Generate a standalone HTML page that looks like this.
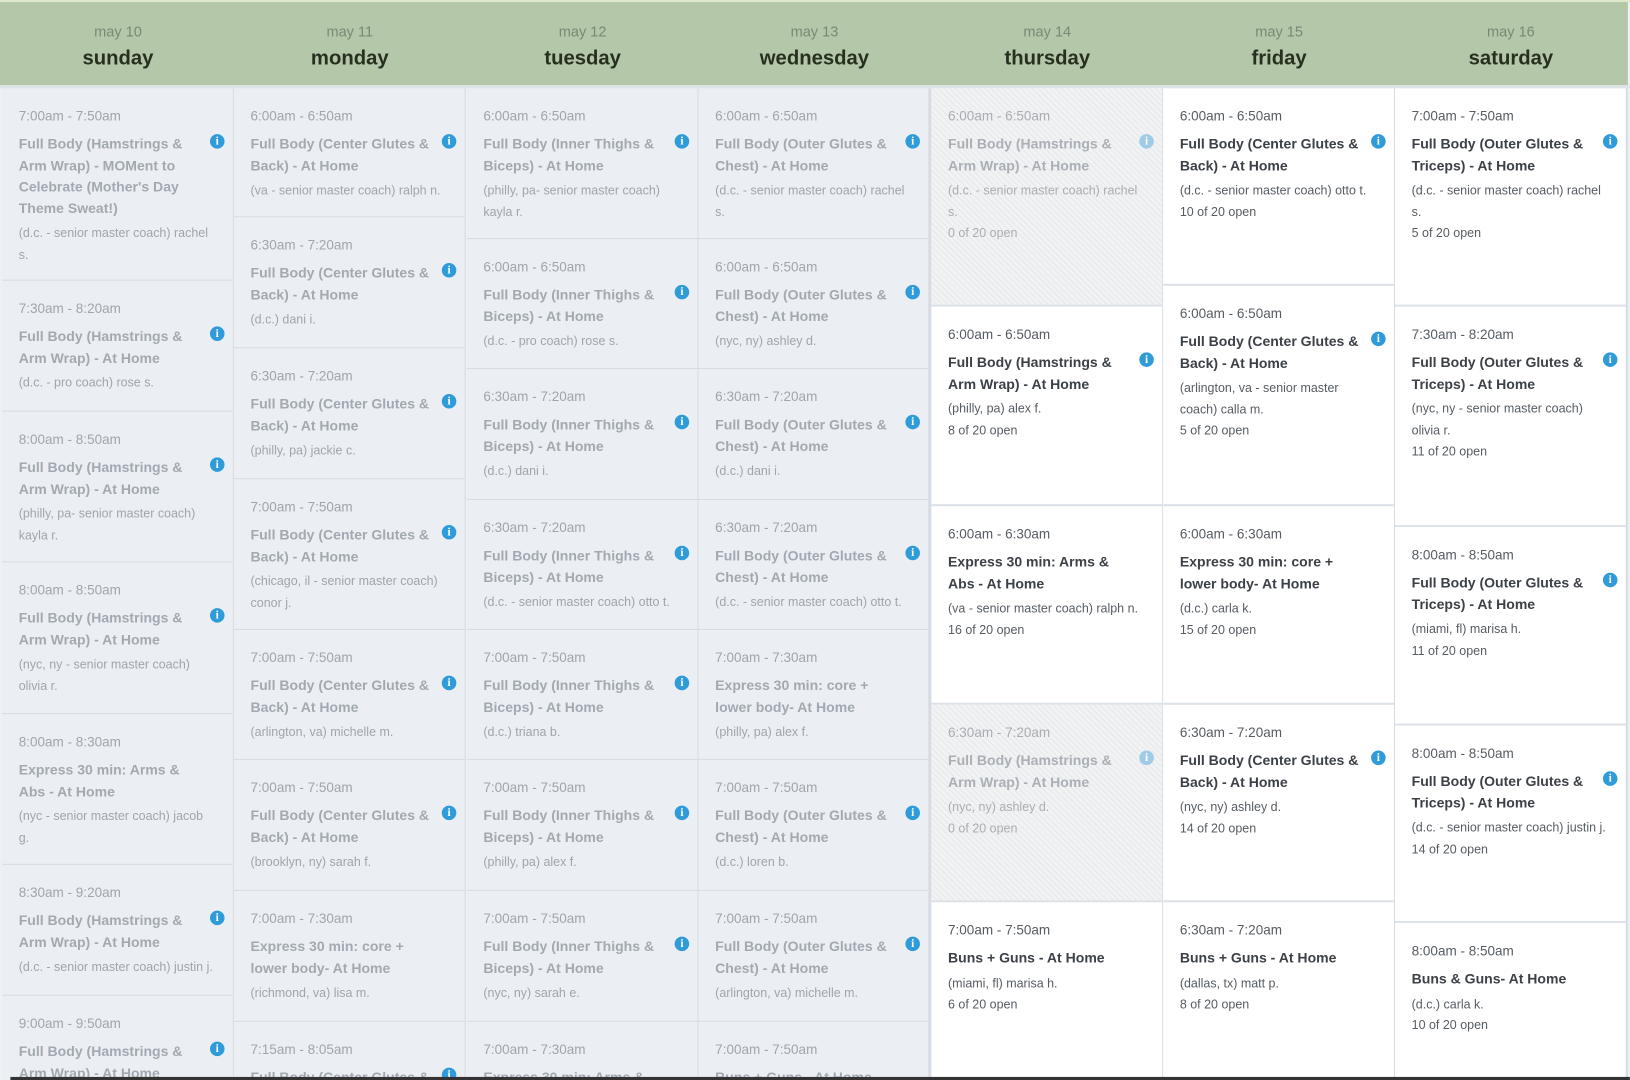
<!DOCTYPE html>
<html><head><meta charset="utf-8"><style>
html,body{margin:0;padding:0;background:#fff;overflow:hidden;width:1630px;height:1080px}
#w{position:absolute;left:0;top:0;width:1568px;height:1039px;transform:scale(1.0395);transform-origin:0 0;font-family:"Liberation Sans",sans-serif;background:#eef1f4;overflow:hidden}
#top{position:absolute;left:0;top:0;width:1568px;height:2px;background:#dfe8c8}
#hd{position:absolute;left:0;top:2px;width:1566px;height:80px;background:#b4c7a9}
#hb{position:absolute;left:0;top:82px;width:1568px;height:3px;background:#dde3e6}
.h{position:absolute;top:0;width:223px;text-align:center}
.h .d{font-size:14px;color:#7b8873;margin-top:19px;line-height:18px}
.h .w{font-size:19.5px;font-weight:bold;color:#27301f;line-height:26px;margin-top:4px}
.col{position:absolute;top:85px;height:954px;width:223px;border-right:1px solid #d6dce2;box-sizing:border-box;overflow:hidden}
.g{background:#ebeff4}
.wh{background:#fff}
.c{position:absolute;left:0;right:0;border-bottom:1px solid #d6dce2;padding:17px 0 0 16px;box-sizing:border-box;overflow:hidden;white-space:nowrap}
.wh .c{border-bottom:2px solid #dde2e8}
.t{font-size:13px;line-height:20px;height:20px}
.n{font-weight:bold;font-size:13.5px;line-height:20.5px;margin-top:7px}
.m{font-size:12px;line-height:20.5px;margin-top:3px}
.g .t,.g .m{color:#9fa5ac}.g .n{color:#a2a9b0}
.wh .t,.wh .m{color:#565c62}.wh .n{color:#3c4147}
.wh .x .t,.wh .x .m{color:#a9aeb3}.wh .x .n{color:#aab0b6}
.x{background:repeating-linear-gradient(45deg,#f1f2f3 0 3px,#e6e8ea 3px 4px)}
.i{position:absolute;right:8px;top:44px;width:14px;height:14px;border-radius:50%;background:#2f9bd9;color:#fff;font-size:11px;font-weight:bold;line-height:14px;text-align:center;font-family:"Liberation Serif",serif}
.x .i{background:#9fcbe8}
#bar{position:absolute;left:10px;top:1036px;width:1558px;height:3px;background:#333}
</style></head><body><div id="w">
<div id="top"></div>
<div id="hd">
<div class="h" style="left:2px"><div class="d">may 10</div><div class="w">sunday</div></div>
<div class="h" style="left:225px"><div class="d">may 11</div><div class="w">monday</div></div>
<div class="h" style="left:449px"><div class="d">may 12</div><div class="w">tuesday</div></div>
<div class="h" style="left:672px"><div class="d">may 13</div><div class="w">wednesday</div></div>
<div class="h" style="left:896px"><div class="d">may 14</div><div class="w">thursday</div></div>
<div class="h" style="left:1119px"><div class="d">may 15</div><div class="w">friday</div></div>
<div class="h" style="left:1342px"><div class="d">may 16</div><div class="w">saturday</div></div>
</div>
<div id="hb"></div>

<div class="col g" style="left:2px">
<div class="c" style="top:0;height:185px"><div class="t">7:00am - 7:50am</div><div class="n">Full Body (Hamstrings &amp;<br>Arm Wrap) - MOMent to<br>Celebrate (Mother's Day<br>Theme Sweat!)</div><div class="m">(d.c. - senior master coach) rachel<br>s.</div><span class="i">i</span></div>
<div class="c" style="top:185px;height:126px"><div class="t">7:30am - 8:20am</div><div class="n">Full Body (Hamstrings &amp;<br>Arm Wrap) - At Home</div><div class="m">(d.c. - pro coach) rose s.</div><span class="i">i</span></div>
<div class="c" style="top:311px;height:145px"><div class="t">8:00am - 8:50am</div><div class="n">Full Body (Hamstrings &amp;<br>Arm Wrap) - At Home</div><div class="m">(philly, pa- senior master coach)<br>kayla r.</div><span class="i">i</span></div>
<div class="c" style="top:456px;height:146px"><div class="t">8:00am - 8:50am</div><div class="n">Full Body (Hamstrings &amp;<br>Arm Wrap) - At Home</div><div class="m">(nyc, ny - senior master coach)<br>olivia r.</div><span class="i">i</span></div>
<div class="c" style="top:602px;height:145px"><div class="t">8:00am - 8:30am</div><div class="n">Express 30 min: Arms &amp;<br>Abs - At Home</div><div class="m">(nyc - senior master coach) jacob<br>g.</div></div>
<div class="c" style="top:747px;height:126px"><div class="t">8:30am - 9:20am</div><div class="n">Full Body (Hamstrings &amp;<br>Arm Wrap) - At Home</div><div class="m">(d.c. - senior master coach) justin j.</div><span class="i">i</span></div>
<div class="c" style="top:873px;height:81px;border:0"><div class="t">9:00am - 9:50am</div><div class="n">Full Body (Hamstrings &amp;<br>Arm Wrap) - At Home</div><span class="i">i</span></div>
</div>

<div class="col g" style="left:225px">
<div class="c" style="top:0;height:124px"><div class="t">6:00am - 6:50am</div><div class="n">Full Body (Center Glutes &amp;<br>Back) - At Home</div><div class="m">(va - senior master coach) ralph n.</div><span class="i">i</span></div>
<div class="c" style="top:124px;height:126px"><div class="t">6:30am - 7:20am</div><div class="n">Full Body (Center Glutes &amp;<br>Back) - At Home</div><div class="m">(d.c.) dani i.</div><span class="i">i</span></div>
<div class="c" style="top:250px;height:126px"><div class="t">6:30am - 7:20am</div><div class="n">Full Body (Center Glutes &amp;<br>Back) - At Home</div><div class="m">(philly, pa) jackie c.</div><span class="i">i</span></div>
<div class="c" style="top:376px;height:145px"><div class="t">7:00am - 7:50am</div><div class="n">Full Body (Center Glutes &amp;<br>Back) - At Home</div><div class="m">(chicago, il - senior master coach)<br>conor j.</div><span class="i">i</span></div>
<div class="c" style="top:521px;height:125px"><div class="t">7:00am - 7:50am</div><div class="n">Full Body (Center Glutes &amp;<br>Back) - At Home</div><div class="m">(arlington, va) michelle m.</div><span class="i">i</span></div>
<div class="c" style="top:646px;height:126px"><div class="t">7:00am - 7:50am</div><div class="n">Full Body (Center Glutes &amp;<br>Back) - At Home</div><div class="m">(brooklyn, ny) sarah f.</div><span class="i">i</span></div>
<div class="c" style="top:772px;height:126px"><div class="t">7:00am - 7:30am</div><div class="n">Express 30 min: core +<br>lower body- At Home</div><div class="m">(richmond, va) lisa m.</div></div>
<div class="c" style="top:898px;height:56px;border:0"><div class="t">7:15am - 8:05am</div><div class="n">Full Body (Center Glutes &amp;<br>Back) - At Home</div><span class="i">i</span></div>
</div>

<div class="col g" style="left:449px">
<div class="c" style="top:0;height:145px"><div class="t">6:00am - 6:50am</div><div class="n">Full Body (Inner Thighs &amp;<br>Biceps) - At Home</div><div class="m">(philly, pa- senior master coach)<br>kayla r.</div><span class="i">i</span></div>
<div class="c" style="top:145px;height:125px"><div class="t">6:00am - 6:50am</div><div class="n">Full Body (Inner Thighs &amp;<br>Biceps) - At Home</div><div class="m">(d.c. - pro coach) rose s.</div><span class="i">i</span></div>
<div class="c" style="top:270px;height:126px"><div class="t">6:30am - 7:20am</div><div class="n">Full Body (Inner Thighs &amp;<br>Biceps) - At Home</div><div class="m">(d.c.) dani i.</div><span class="i">i</span></div>
<div class="c" style="top:396px;height:125px"><div class="t">6:30am - 7:20am</div><div class="n">Full Body (Inner Thighs &amp;<br>Biceps) - At Home</div><div class="m">(d.c. - senior master coach) otto t.</div><span class="i">i</span></div>
<div class="c" style="top:521px;height:125px"><div class="t">7:00am - 7:50am</div><div class="n">Full Body (Inner Thighs &amp;<br>Biceps) - At Home</div><div class="m">(d.c.) triana b.</div><span class="i">i</span></div>
<div class="c" style="top:646px;height:126px"><div class="t">7:00am - 7:50am</div><div class="n">Full Body (Inner Thighs &amp;<br>Biceps) - At Home</div><div class="m">(philly, pa) alex f.</div><span class="i">i</span></div>
<div class="c" style="top:772px;height:126px"><div class="t">7:00am - 7:50am</div><div class="n">Full Body (Inner Thighs &amp;<br>Biceps) - At Home</div><div class="m">(nyc, ny) sarah e.</div><span class="i">i</span></div>
<div class="c" style="top:898px;height:56px;border:0"><div class="t">7:00am - 7:30am</div><div class="n">Express 30 min: Arms &amp;<br>Abs - At Home</div></div>
</div>

<div class="col g" style="left:672px;border-right:3px solid #d6dce2;width:224px">
<div class="c" style="top:0;height:145px"><div class="t">6:00am - 6:50am</div><div class="n">Full Body (Outer Glutes &amp;<br>Chest) - At Home</div><div class="m">(d.c. - senior master coach) rachel<br>s.</div><span class="i">i</span></div>
<div class="c" style="top:145px;height:125px"><div class="t">6:00am - 6:50am</div><div class="n">Full Body (Outer Glutes &amp;<br>Chest) - At Home</div><div class="m">(nyc, ny) ashley d.</div><span class="i">i</span></div>
<div class="c" style="top:270px;height:126px"><div class="t">6:30am - 7:20am</div><div class="n">Full Body (Outer Glutes &amp;<br>Chest) - At Home</div><div class="m">(d.c.) dani i.</div><span class="i">i</span></div>
<div class="c" style="top:396px;height:125px"><div class="t">6:30am - 7:20am</div><div class="n">Full Body (Outer Glutes &amp;<br>Chest) - At Home</div><div class="m">(d.c. - senior master coach) otto t.</div><span class="i">i</span></div>
<div class="c" style="top:521px;height:125px"><div class="t">7:00am - 7:30am</div><div class="n">Express 30 min: core +<br>lower body- At Home</div><div class="m">(philly, pa) alex f.</div></div>
<div class="c" style="top:646px;height:126px"><div class="t">7:00am - 7:50am</div><div class="n">Full Body (Outer Glutes &amp;<br>Chest) - At Home</div><div class="m">(d.c.) loren b.</div><span class="i">i</span></div>
<div class="c" style="top:772px;height:126px"><div class="t">7:00am - 7:50am</div><div class="n">Full Body (Outer Glutes &amp;<br>Chest) - At Home</div><div class="m">(arlington, va) michelle m.</div><span class="i">i</span></div>
<div class="c" style="top:898px;height:56px;border:0"><div class="t">7:00am - 7:50am</div><div class="n">Buns + Guns - At Home</div></div>
</div>

<div class="col wh" style="left:896px">
<div class="c x" style="top:0;height:210px"><div class="t">6:00am - 6:50am</div><div class="n">Full Body (Hamstrings &amp;<br>Arm Wrap) - At Home</div><div class="m">(d.c. - senior master coach) rachel<br>s.<br>0 of 20 open</div><span class="i">i</span></div>
<div class="c" style="top:210px;height:192px"><div class="t">6:00am - 6:50am</div><div class="n">Full Body (Hamstrings &amp;<br>Arm Wrap) - At Home</div><div class="m">(philly, pa) alex f.<br>8 of 20 open</div><span class="i">i</span></div>
<div class="c" style="top:402px;height:191px"><div class="t">6:00am - 6:30am</div><div class="n">Express 30 min: Arms &amp;<br>Abs - At Home</div><div class="m">(va - senior master coach) ralph n.<br>16 of 20 open</div></div>
<div class="c x" style="top:593px;height:190px"><div class="t">6:30am - 7:20am</div><div class="n">Full Body (Hamstrings &amp;<br>Arm Wrap) - At Home</div><div class="m">(nyc, ny) ashley d.<br>0 of 20 open</div><span class="i">i</span></div>
<div class="c" style="top:783px;height:171px;border:0"><div class="t">7:00am - 7:50am</div><div class="n">Buns + Guns - At Home</div><div class="m">(miami, fl) marisa h.<br>6 of 20 open</div></div>
</div>

<div class="col wh" style="left:1119px">
<div class="c" style="top:0;height:190px"><div class="t">6:00am - 6:50am</div><div class="n">Full Body (Center Glutes &amp;<br>Back) - At Home</div><div class="m">(d.c. - senior master coach) otto t.<br>10 of 20 open</div><span class="i">i</span></div>
<div class="c" style="top:190px;height:212px"><div class="t">6:00am - 6:50am</div><div class="n">Full Body (Center Glutes &amp;<br>Back) - At Home</div><div class="m">(arlington, va - senior master<br>coach) calla m.<br>5 of 20 open</div><span class="i">i</span></div>
<div class="c" style="top:402px;height:191px"><div class="t">6:00am - 6:30am</div><div class="n">Express 30 min: core +<br>lower body- At Home</div><div class="m">(d.c.) carla k.<br>15 of 20 open</div></div>
<div class="c" style="top:593px;height:190px"><div class="t">6:30am - 7:20am</div><div class="n">Full Body (Center Glutes &amp;<br>Back) - At Home</div><div class="m">(nyc, ny) ashley d.<br>14 of 20 open</div><span class="i">i</span></div>
<div class="c" style="top:783px;height:171px;border:0"><div class="t">6:30am - 7:20am</div><div class="n">Buns + Guns - At Home</div><div class="m">(dallas, tx) matt p.<br>8 of 20 open</div></div>
</div>

<div class="col wh" style="left:1342px;width:224px;border-right:2px solid #d6dce2">
<div class="c" style="top:0;height:210px"><div class="t">7:00am - 7:50am</div><div class="n">Full Body (Outer Glutes &amp;<br>Triceps) - At Home</div><div class="m">(d.c. - senior master coach) rachel<br>s.<br>5 of 20 open</div><span class="i">i</span></div>
<div class="c" style="top:210px;height:212px"><div class="t">7:30am - 8:20am</div><div class="n">Full Body (Outer Glutes &amp;<br>Triceps) - At Home</div><div class="m">(nyc, ny - senior master coach)<br>olivia r.<br>11 of 20 open</div><span class="i">i</span></div>
<div class="c" style="top:422px;height:191px"><div class="t">8:00am - 8:50am</div><div class="n">Full Body (Outer Glutes &amp;<br>Triceps) - At Home</div><div class="m">(miami, fl) marisa h.<br>11 of 20 open</div><span class="i">i</span></div>
<div class="c" style="top:613px;height:190px"><div class="t">8:00am - 8:50am</div><div class="n">Full Body (Outer Glutes &amp;<br>Triceps) - At Home</div><div class="m">(d.c. - senior master coach) justin j.<br>14 of 20 open</div><span class="i">i</span></div>
<div class="c" style="top:803px;height:151px;border:0"><div class="t">8:00am - 8:50am</div><div class="n">Buns &amp; Guns- At Home</div><div class="m">(d.c.) carla k.<br>10 of 20 open</div></div>
</div>

<div id="bar"></div>
</div></body></html>
